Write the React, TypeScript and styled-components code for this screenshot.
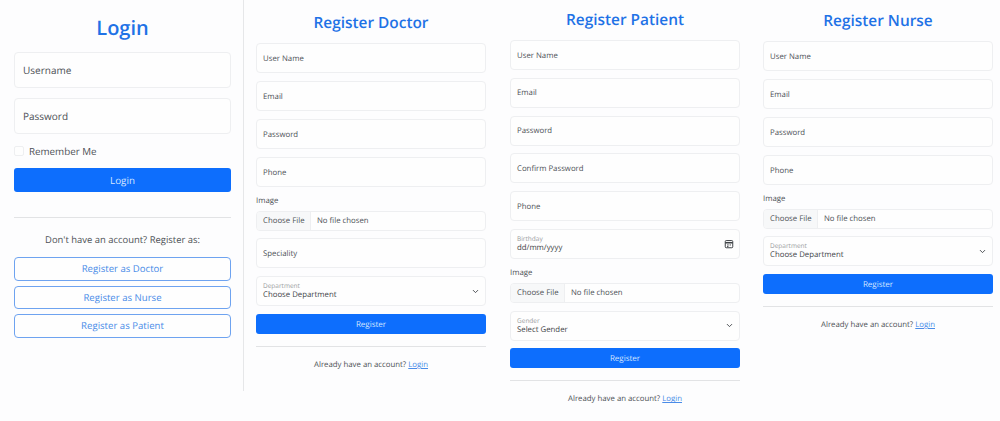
import React from 'react';
import styled, { createGlobalStyle } from 'styled-components';
import { ChevronDown } from 'lucide-react';

const Global = createGlobalStyle`
  html, body { margin: 0; padding: 0; background: #ffffff; }
  body {
    font-family: "Open Sans", "Noto Sans", sans-serif;
    color: #3f4347;
    text-rendering: geometricPrecision;
  }
  * { box-sizing: border-box; }
`;

const Page = styled.div`
  width: 1000px;
  height: 421px;
  overflow: hidden;
  display: grid;
  grid-template-columns: 244px 254px 254px 248px;
  align-items: start;
  background: #fdfdfe;
`;

const LoginCol = styled.section`
  height: 391px;
  padding: 14px 12px 0 14px;
  border-right: 1px solid #e6e7e9;
  display: flex;
  flex-direction: column;
`;

const RegisterCol = styled.section<{ $top: number; $left: number; $right: number; $pitch?: number }>`
  padding: ${(p) => p.$top}px ${(p) => p.$right}px 0 ${(p) => p.$left}px;
  display: flex;
  flex-direction: column;
  --field-gap: ${(p) => p.$pitch ?? 8}px;
  --file-gap: ${(p) => p.$pitch ?? 7}px;
`;

const Title = styled.h2<{ $big?: boolean }>`
  margin: 0 0 ${(p) => (p.$big ? 11 : 9)}px;
  padding-top: 1px;
  height: ${(p) => (p.$big ? 27 : 23)}px;
  line-height: ${(p) => (p.$big ? 26 : 22)}px;
  font-size: ${(p) => (p.$big ? 20 : 15.4)}px;
  font-weight: 600;
  text-align: center;
  color: #1f72e6;
`;

const Input = styled.div<{ $big?: boolean }>`
  height: ${(p) => (p.$big ? 36 : 30)}px;
  margin-bottom: ${(p) => (p.$big ? '10px' : 'var(--field-gap)')};
  padding: ${(p) => (p.$big ? '0 8px' : '1px 6px 0')};
  display: flex;
  align-items: center;
  justify-content: space-between;
  font-size: ${(p) => (p.$big ? 10 : 7.8)}px;
  color: #4d5156;
  background: #fefefe;
  border: 1px solid #eeeff1;
  border-radius: 4px;
`;

const Floating = styled(Input)`
  display: grid;
  grid-template-columns: 1fr auto;
  align-items: center;
  padding: 0 5px 0 6px;
`;

const FloatText = styled.div`
  display: flex;
  flex-direction: column;
`;

const Small = styled.span`
  font-size: 6.5px;
  line-height: 9px;
  color: #9a9da1;
`;

const Value = styled.span`
  font-size: 7.8px;
  line-height: 11px;
  color: #3f4347;
`;

const Label = styled.div`
  height: 12px;
  line-height: 12px;
  margin: 0 0 4px;
  font-size: 7.8px;
  color: #4d5156;
`;

const FileInput = styled.div`
  height: 20px;
  margin-bottom: var(--file-gap);
  display: flex;
  align-items: center;
  font-size: 7.8px;
  color: #4d5156;
  border: 1px solid #eeeff1;
  border-radius: 4px;
  background: #fefefe;
  overflow: hidden;
`;

const FileButton = styled.span`
  height: 100%;
  width: 54px;
  padding: 0 0 0 6px;
  margin-right: 6px;
  display: flex;
  align-items: center;
  background: #f7f8f9;
  border-right: 1px solid #eeeff1;
`;

const Primary = styled.div<{ $big?: boolean }>`
  height: ${(p) => (p.$big ? 24 : 20)}px;
  display: flex;
  align-items: center;
  justify-content: center;
  font-size: ${(p) => (p.$big ? 9.8 : 8)}px;
  color: #d6e6ff;
  background: #0d6efd;
  border-radius: 3px;
`;

const Rule = styled.hr<{ $big?: boolean }>`
  width: 100%;
  margin: ${(p) => (p.$big ? 25 : 12)}px 0 0;
  border: 0;
  border-top: 1px solid #e2e3e5;
`;

const Note = styled.p<{ $big?: boolean }>`
  margin: ${(p) => (p.$big ? 15 : 12)}px 0 ${(p) => (p.$big ? 10 : 0)}px;
  line-height: ${(p) => (p.$big ? 14 : 12)}px;
  font-size: ${(p) => (p.$big ? 9.45 : 7.8)}px;
  text-align: center;
  color: #4d5156;
`;

const NoteLink = styled.a`
  color: #4a8ce8;
  text-decoration: underline;
`;

const RememberRow = styled.label`
  display: flex;
  align-items: center;
  gap: 5px;
  height: 14px;
  margin: 0 0 10px;
  font-size: 9.8px;
  color: #4d5156;
`;

const Check = styled.span`
  width: 10px;
  height: 10px;
  border: 1px solid #eeeff1;
  border-radius: 2px;
  background: #fefefe;
`;

const OutlineStack = styled.div`
  display: flex;
  flex-direction: column;
  gap: 5px;
`;

const Outline = styled.div`
  height: 23.5px;
  display: flex;
  align-items: center;
  justify-content: center;
  font-size: 9.6px;
  color: #4a8ce8;
  border: 1px solid #6ea3f0;
  border-radius: 4px;
  background: #fefefe;
`;

const Chevron = styled(ChevronDown)`
  width: 9px;
  height: 9px;
  color: #3f4347;
`;

const CalendarIcon = () => (
  <svg width="10" height="10" viewBox="0 0 16 16" fill="none" stroke="#3f4347" strokeWidth="1.6">
    <rect x="2" y="2.5" width="12" height="11.5" rx="1.5" />
    <path d="M2 6h12" strokeWidth="2.4" />
    <path d="M5 9.5h2.5M9 9.5h2M5 12h2" />
  </svg>
);

const Field = ({ label }: { label: string }) => <Input>{label}</Input>;

const ImageField = () => (
  <>
    <Label>Image</Label>
    <FileInput>
      <FileButton>Choose File</FileButton>
      No file chosen
    </FileInput>
  </>
);

const SelectField = ({ label, value }: { label: string; value: string }) => (
  <Floating>
    <FloatText>
      <Small>{label}</Small>
      <Value>{value}</Value>
    </FloatText>
    <Chevron strokeWidth={2.4} />
  </Floating>
);

const Footer = () => (
  <>
    <Primary>Register</Primary>
    <Rule />
    <Note>
      Already have an account? <NoteLink>Login</NoteLink>
    </Note>
  </>
);

const App = () => {
  return (
    <Page>
      <Global />
      <LoginCol>
        <Title $big>Login</Title>
        <Input $big>Username</Input>
        <Input $big>Password</Input>
        <RememberRow>
          <Check />
          Remember Me
        </RememberRow>
        <Primary $big>Login</Primary>
        <Rule $big />
        <Note $big>Don't have an account? Register as:</Note>
        <OutlineStack>
          <Outline>Register as Doctor</Outline>
          <Outline>Register as Nurse</Outline>
          <Outline>Register as Patient</Outline>
        </OutlineStack>
      </LoginCol>

      <RegisterCol $top={11} $left={12} $right={12}>
        <Title>Register Doctor</Title>
        <Field label="User Name" />
        <Field label="Email" />
        <Field label="Password" />
        <Field label="Phone" />
        <ImageField />
        <Field label="Speciality" />
        <SelectField label="Department" value="Choose Department" />
        <Footer />
      </RegisterCol>

      <RegisterCol $top={8} $left={12} $right={12} $pitch={7.8}>
        <Title>Register Patient</Title>
        <Field label="User Name" />
        <Field label="Email" />
        <Field label="Password" />
        <Field label="Confirm Password" />
        <Field label="Phone" />
        <Floating>
          <FloatText>
            <Small>Birthday</Small>
            <Value>dd/mm/yyyy</Value>
          </FloatText>
          <CalendarIcon />
        </Floating>
        <ImageField />
        <SelectField label="Gender" value="Select Gender" />
        <Footer />
      </RegisterCol>

      <RegisterCol $top={9} $left={11} $right={7}>
        <Title>Register Nurse</Title>
        <Field label="User Name" />
        <Field label="Email" />
        <Field label="Password" />
        <Field label="Phone" />
        <ImageField />
        <SelectField label="Department" value="Choose Department" />
        <Footer />
      </RegisterCol>
    </Page>
  );
};

export default App;
